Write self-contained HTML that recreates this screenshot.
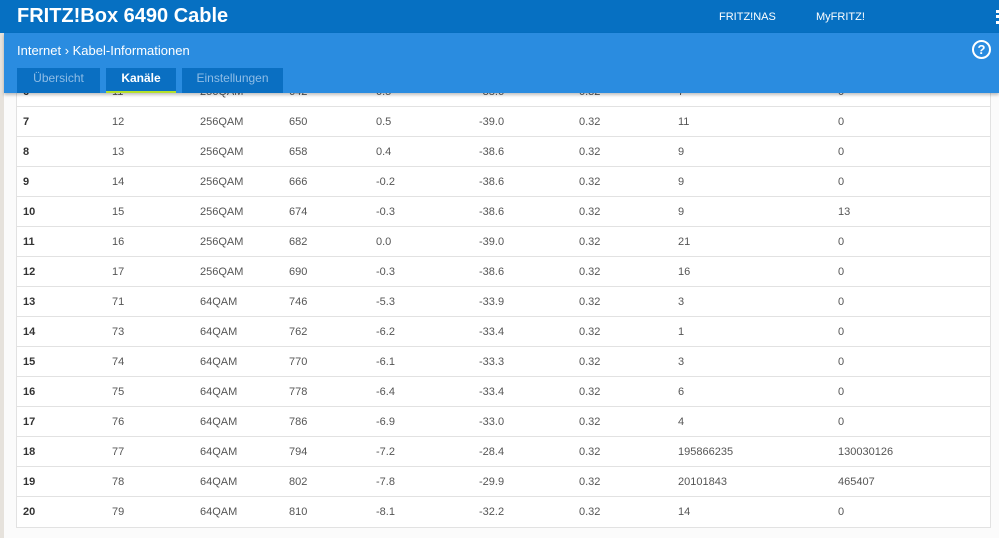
<!DOCTYPE html>
<html><head><meta charset="utf-8"><style>
*{margin:0;padding:0;box-sizing:border-box}
body{width:999px;height:538px;overflow:hidden;background:#fbfbfb;font-family:"Liberation Sans",sans-serif;position:relative}
.strip{position:absolute;left:0;top:0;width:4px;height:538px;background:#e6e2dc}
.tbl{position:absolute;left:16px;top:76px;width:975px;background:#fff;border:1px solid #e2e2e2}
.row{height:30px;border-bottom:1px solid #e2e2e2;position:relative;font-size:11px;color:#555}
.row:last-child{border-bottom:none}
.row span{position:absolute;top:9px}
.row span:first-child{color:#333;font-weight:bold}
.top{position:absolute;left:0;top:0;width:999px;height:33px;background:#0670c2}
.title{position:absolute;left:17px;top:5px;color:#fff;font-size:20px;font-weight:bold}
.nav{position:absolute;top:11px;color:#fff;font-size:11px}
.sub{position:absolute;left:4px;top:33px;width:995px;height:60px;background:#2a8ce0;box-shadow:0 2px 3px rgba(0,0,0,.25)}
.crumb{position:absolute;left:13px;top:10px;color:#fff;font-size:13px}
.help{position:absolute;left:968px;top:7px;width:19px;height:19px;border:2px solid #fff;border-radius:50%;color:#fff;font-size:13px;font-weight:bold;text-align:center;line-height:15px}
.tab{position:absolute;top:35px;height:25px;background:#0a6fc2;color:#8fbde6;font-size:12px;text-align:center;line-height:21px}
.tab.act{color:#fff;font-weight:bold;border-bottom:2px solid #b5e02a}
</style></head><body>
<div class="strip"></div>
<div class="tbl" id="t"></div>
<div class="top"><div class="title">FRITZ!Box 6490 Cable</div>
<div class="nav" style="left:719px">FRITZ!NAS</div><div class="nav" style="left:816px">MyFRITZ!</div>
<div style="position:absolute;left:996px;top:10px;width:3px;height:14px;border-left:3px dotted #fff"></div></div>
<div class="sub"><div class="crumb">Internet › Kabel-Informationen</div><div class="help">?</div>
<div class="tab" style="left:13px;width:83px">Übersicht</div>
<div class="tab act" style="left:102px;width:70px">Kanäle</div>
<div class="tab" style="left:178px;width:101px">Einstellungen</div></div>
<script>
var d=[["6","11","256QAM","642","0.5","-38.6","0.32","7","0"],
["7","12","256QAM","650","0.5","-39.0","0.32","11","0"],
["8","13","256QAM","658","0.4","-38.6","0.32","9","0"],
["9","14","256QAM","666","-0.2","-38.6","0.32","9","0"],
["10","15","256QAM","674","-0.3","-38.6","0.32","9","13"],
["11","16","256QAM","682","0.0","-39.0","0.32","21","0"],
["12","17","256QAM","690","-0.3","-38.6","0.32","16","0"],
["13","71","64QAM","746","-5.3","-33.9","0.32","3","0"],
["14","73","64QAM","762","-6.2","-33.4","0.32","1","0"],
["15","74","64QAM","770","-6.1","-33.3","0.32","3","0"],
["16","75","64QAM","778","-6.4","-33.4","0.32","6","0"],
["17","76","64QAM","786","-6.9","-33.0","0.32","4","0"],
["18","77","64QAM","794","-7.2","-28.4","0.32","195866235","130030126"],
["19","78","64QAM","802","-7.8","-29.9","0.32","20101843","465407"],
["20","79","64QAM","810","-8.1","-32.2","0.32","14","0"]];
var x=[6,95,183,272,359,462,562,661,821],h="";
d.forEach(function(r){h+='<div class="row">';r.forEach(function(c,i){h+='<span style="left:'+x[i]+'px">'+c+'</span>'});h+='</div>'});
document.getElementById('t').innerHTML=h;
</script>
</body></html>
